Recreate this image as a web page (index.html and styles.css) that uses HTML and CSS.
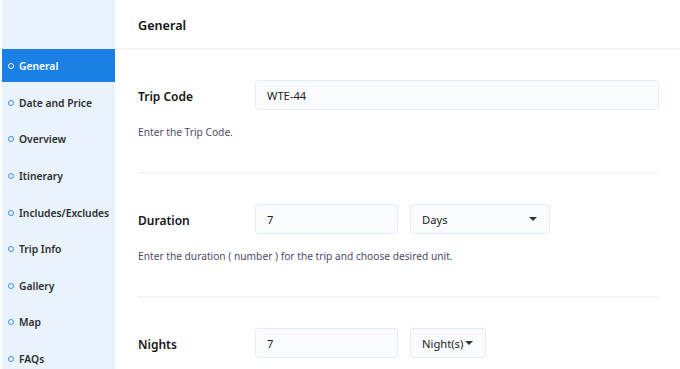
FILE: index.html
```html
<!DOCTYPE html>
<html lang="en">
<head>
<meta charset="utf-8">
<title>Trip Settings</title>
<link rel="stylesheet" href="styles.css">
</head>
<body>
<div class="app">
  <aside class="sidebar">
    <ul class="nav">
      <li class="nav-item active"><span class="dot"></span>General</li>
      <li class="nav-item"><span class="dot"></span>Date and Price</li>
      <li class="nav-item"><span class="dot"></span>Overview</li>
      <li class="nav-item"><span class="dot"></span>Itinerary</li>
      <li class="nav-item"><span class="dot"></span>Includes/Excludes</li>
      <li class="nav-item"><span class="dot"></span>Trip Info</li>
      <li class="nav-item"><span class="dot"></span>Gallery</li>
      <li class="nav-item"><span class="dot"></span>Map</li>
      <li class="nav-item"><span class="dot"></span>FAQs</li>
    </ul>
  </aside>
  <main class="main">
    <header class="header"><h1 class="title">General</h1></header>
    <section class="field">
      <div class="row">
        <label class="label">Trip Code</label>
        <div class="input wide">WTE-44</div>
      </div>
      <p class="help">Enter the Trip Code.</p>
    </section>
    <section class="field">
      <div class="row">
        <label class="label">Duration</label>
        <div class="input num">7</div>
        <div class="input select days"><span>Days</span><span class="caret"></span></div>
      </div>
      <p class="help">Enter the duration ( number ) for the trip and choose desired unit.</p>
    </section>
    <section class="field last">
      <div class="row">
        <label class="label">Nights</label>
        <div class="input num">7</div>
        <div class="input select nights"><span>Night(s)</span><span class="caret"></span></div>
      </div>
    </section>
  </main>
</div>
</body>
</html>
```

FILE: styles.css
```css
* { box-sizing: border-box; }
html, body { margin: 0; padding: 0; background: #fff; }
body {
  font-family: "Noto Sans", "Open Sans", sans-serif;
  color: #1e1e1e;
  width: 680px;
  height: 369px;
  overflow: hidden;
}
.app {
  display: flex;
  height: 369px;
  padding-left: 2px;
  overflow: hidden;
}
.sidebar {
  width: 113px;
  flex: none;
  background: #e9f3fd;
  padding-top: 49px;
  overflow: hidden;
}
.nav {
  list-style: none;
  margin: 0;
  padding: 0;
  display: flex;
  flex-direction: column;
  gap: 3.65px;
}
.nav-item {
  height: 33px;
  flex: none;
  display: flex;
  align-items: center;
  gap: 5px;
  padding-left: 6px;
  padding-top: 1px;
  font-size: 10.3px;
  font-weight: 600;
  color: #2e2e2e;
  white-space: nowrap;
}
.dot {
  width: 6px;
  height: 6px;
  border-radius: 50%;
  border: 1.6px solid #3e93e6;
  flex: none;
}
.nav-item.active {
  background: #1a80e6;
  color: #fff;
}
.nav-item.active .dot { border-color: #fff; }
.main {
  flex: 1;
  display: flex;
  flex-direction: column;
  min-height: 0;
  overflow: hidden;
}
.header {
  flex: none;
  height: 50px;
  border-bottom: 2px solid #f3f4f6;
  display: flex;
  align-items: center;
  padding-left: 23px;
  padding-top: 3px;
}
.title {
  margin: 0;
  font-size: 12.6px;
  font-weight: 600;
  color: #111;
}
.field {
  flex: none;
  margin: 0 21px 0 23px;
  padding-top: 30px;
  padding-bottom: 32px;
  border-bottom: 2px solid #f3f5f7;
}
.field.last { border-bottom: none; padding-bottom: 0; }
.row {
  display: flex;
  align-items: center;
  height: 30px;
}
.label {
  width: 117px;
  flex: none;
  font-size: 12px;
  font-weight: 600;
  color: #161616;
  padding-top: 2px;
}
.input {
  height: 30px;
  border: 1px solid #e3eefb;
  border-radius: 3px;
  background: #f9fbfe;
  font-size: 11.2px;
  color: #222;
  display: flex;
  align-items: center;
  padding-left: 11px;
}
.wide { flex: 1; }
.num { width: 143px; }
.select {
  margin-left: 12px;
  justify-content: space-between;
  padding-right: 12px;
}
.days { width: 140px; }
.nights { width: 76px; }
.caret {
  width: 0;
  height: 0;
  border-left: 4.5px solid transparent;
  border-right: 4.5px solid transparent;
  border-top: 4.5px solid #333;
}
.help {
  margin: 14px 0 0;
  font-size: 10.2px;
  color: #4f4a68;
  line-height: 16px;
}
```
